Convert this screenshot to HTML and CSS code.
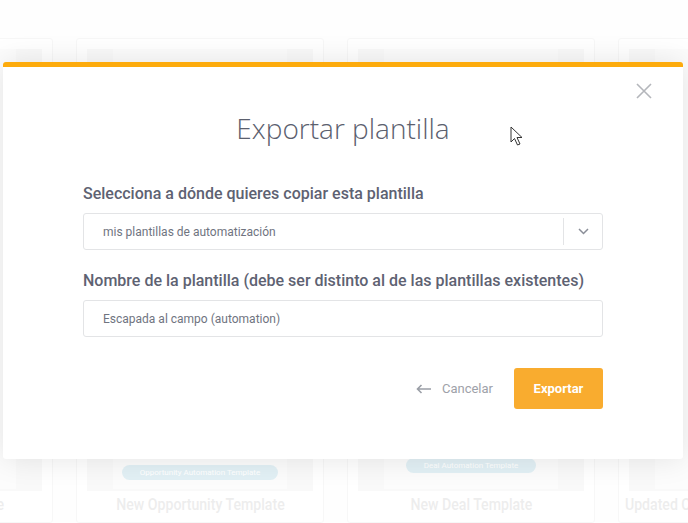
FILE: index.html
```html
<!DOCTYPE html>
<html>
<head>
    <link rel="stylesheet" href="styles.css">
</head>
<body>
    <div class="board">
        <div class="card">
            <div class="thumb"><div class="thumb-inner"></div></div>
            <div class="card-title"><span>Proposal Sent Template</span></div>
        </div>
        <div class="card">
            <div class="thumb">
                <div class="thumb-inner">
                    <span class="pill">Opportunity Automation Template</span>
                </div>
            </div>
            <div class="card-title"><span>New Opportunity Template</span></div>
        </div>
        <div class="card">
            <div class="thumb">
                <div class="thumb-inner thumb-high">
                    <span class="pill">Deal Automation Template</span>
                </div>
            </div>
            <div class="card-title"><span>New Deal Template</span></div>
        </div>
        <div class="card">
            <div class="thumb"><div class="thumb-inner"></div></div>
            <div class="card-title"><span>Updated Customer Contact Template</span></div>
        </div>
    </div>

    <div class="overlay"></div>

    <div class="modal">
        <button class="close" title="Cerrar">
            <svg width="16" height="16" viewBox="0 0 16 16">
                <path d="M1 1 L15 15 M15 1 L1 15" stroke="#b4b6bb" stroke-width="1.6" fill="none"/>
            </svg>
        </button>

        <h1 class="modal-title">Exportar plantilla</h1>

        <div class="form">
            <label class="field-label">Selecciona a dónde quieres copiar esta plantilla</label>
            <div class="select">
                <span class="select-value">mis plantillas de automatización</span>
                <span class="select-arrow">
                    <svg width="11" height="7" viewBox="0 0 11 7">
                        <path d="M1 1 L5.5 5.5 L10 1" stroke="#8a8e98" stroke-width="1.5" fill="none"/>
                    </svg>
                </span>
            </div>

            <label class="field-label">Nombre de la plantilla (debe ser distinto al de las plantillas existentes)</label>
            <input class="text-input" type="text" value="Escapada al campo (automation)">

            <div class="actions">
                <button class="cancel">
                    <svg width="16" height="10" viewBox="0 0 16 10">
                        <path d="M15 5 H1.5 M5.5 1 L1.5 5 L5.5 9" stroke="#9a9ea6" stroke-width="1.6" fill="none"/>
                    </svg>
                    Cancelar
                </button>
                <button class="primary">Exportar</button>
            </div>
        </div>
    </div>

    <svg class="cursor" width="14" height="21" viewBox="0 0 14 21">
        <path d="M1 1 V16 L4.5 12.5 L7.5 19 L10 18 L7 11.5 H12 Z" fill="#fff" stroke="#333" stroke-width="1"/>
    </svg>
</body>
</html>
```

FILE: styles.css
```css
* {
    box-sizing: border-box;
    margin: 0;
    padding: 0;
}

body {
    font-family: Roboto, 'Liberation Sans', sans-serif;
    background-color: #fdfdfd;
    width: 688px;
    height: 523px;
    overflow: hidden;
    position: relative;
}

/* faded template cards behind the dialog */
.board {
    display: flex;
    gap: 23px;
    margin-left: -195px;
    padding-top: 38px;
}

.card {
    flex: 0 0 248px;
    height: 485px;
    background: #fff;
    border: 1px solid #ececec;
    border-radius: 3px;
    padding: 10px 10px 0;
    display: flex;
    flex-direction: column;
}

.thumb {
    height: 442px;
    background: #f0f0f0;
    padding: 0 26px 2px;
    display: flex;
}

.thumb-inner {
    flex: 1;
    background: #f8f8f8;
    display: flex;
    align-items: flex-end;
    justify-content: center;
    padding-bottom: 9px;
}

.thumb-high {
    padding-bottom: 16px;
}

.pill {
    background: #b7dae6;
    color: #fff;
    font-size: 8px;
    padding: 3px 18px;
    border-radius: 10px;
}

.card-title {
    margin: 0 -50px;
    padding-top: 3px;
    text-align: center;
    white-space: nowrap;
}

.card-title span {
    display: inline-block;
    font-size: 17px;
    font-weight: 500;
    color: #d2d2d2;
    transform: scaleX(0.83);
}

.overlay {
    position: absolute;
    inset: 0;
    background: rgba(255, 255, 255, 0.6);
}

/* dialog */
.modal {
    position: absolute;
    top: 62px;
    left: 3px;
    width: 680px;
    height: 397px;
    background: #fff;
    border-top: 5px solid #fdab0c;
    border-radius: 3px;
    box-shadow: 0 0 30px rgba(0, 0, 0, 0.1);
    padding: 44px 80px 0;
}

.close {
    position: absolute;
    top: 16px;
    right: 31px;
    border: none;
    background: none;
    width: 16px;
    height: 16px;
    cursor: pointer;
}

.modal-title {
    font-family: 'Open Sans', sans-serif;
    font-weight: 300;
    font-size: 28px;
    line-height: 34px;
    color: #5b606e;
    text-align: center;
    margin-bottom: 39px;
}

.field-label {
    display: block;
    font-size: 16px;
    font-weight: 500;
    line-height: 20px;
    color: #5e6272;
    margin-bottom: 9px;
}

.select,
.text-input {
    width: 520px;
    height: 37px;
    border: 1px solid #e3e4e6;
    border-radius: 3px;
    background: #fff;
    font-family: Roboto, sans-serif;
    font-size: 12px;
    color: #70747f;
}

.select {
    display: flex;
    align-items: center;
    margin-bottom: 21px;
}

.select-value {
    flex: 1;
    padding-left: 19px;
}

.select-arrow {
    width: 39px;
    height: 27px;
    border-left: 1px solid #e3e4e6;
    display: flex;
    align-items: center;
    justify-content: center;
}

.text-input {
    display: block;
    padding-left: 19px;
    outline: none;
}

.actions {
    display: flex;
    justify-content: flex-end;
    align-items: center;
    gap: 21px;
    margin-top: 31px;
}

.actions button {
    font-family: Roboto, sans-serif;
    font-size: 13px;
    cursor: pointer;
    border: none;
}

.cancel {
    background: none;
    color: #9ea1a9;
    display: flex;
    align-items: center;
    gap: 10px;
}

.primary {
    width: 89px;
    height: 41px;
    background: #f9ac2f;
    color: #fff;
    font-weight: 700;
    border-radius: 3px;
}

.cursor {
    position: absolute;
    left: 510px;
    top: 126px;
}
```
